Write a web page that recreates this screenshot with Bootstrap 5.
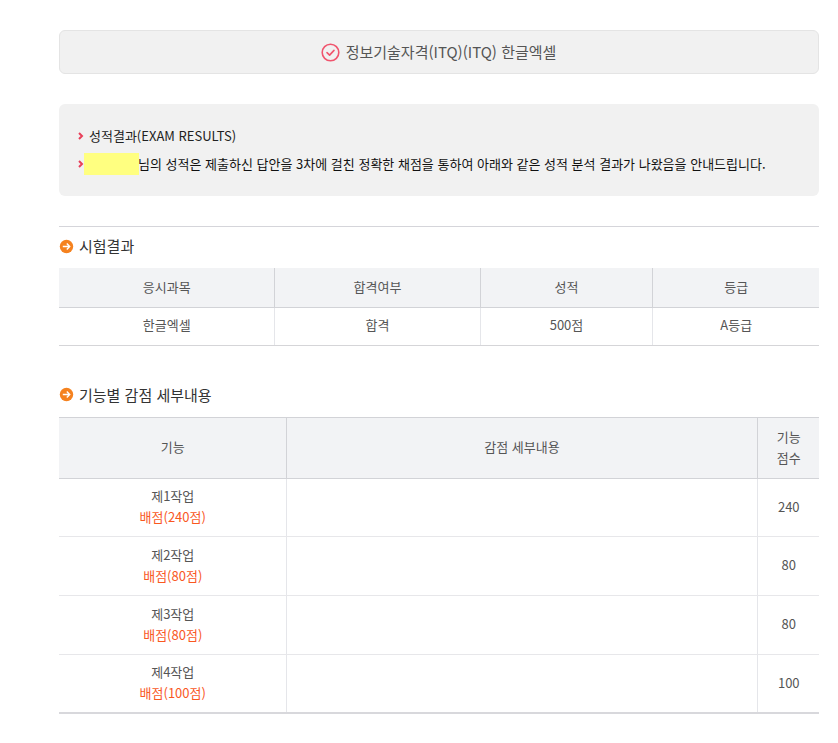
<!DOCTYPE html>
<html lang="ko">
<head>
<meta charset="utf-8">
<title>성적결과</title>
<link href="https://cdn.jsdelivr.net/npm/bootstrap@5.3.0/dist/css/bootstrap.min.css" rel="stylesheet">
<style>
body{font-family:"Noto Sans CJK KR","Noto Sans",sans-serif;font-size:13px;color:#555;background:#fff;overflow:hidden;}
.page-wrap{width:760px;margin-left:59px;padding-top:30px;}
.subject-box{height:44px;background:#f1f1f1;border:1px solid #e4e4e4;border-radius:6px;font-size:15px;color:#555;margin-bottom:30px;gap:6px;padding-right:1px;}
.result-box{height:92px;background:#f1f1f1;border-radius:6px;padding:18px 19px;color:#222;font-size:13px;margin-bottom:30px;}
.result-line{height:28px;line-height:22px;}
.result-strong{color:#111;}
.chev{width:6px;height:8px;margin-right:5px;flex:none;}
.masked{background:#ffff80;width:55px;height:22px;margin-left:-5px;margin-right:-1px;flex:none;}
.sec-title{border-top:1px solid #d5d5da;}
.sec-head{font-size:15px;color:#333;line-height:20px;gap:5px;}
.sec-head svg{flex:none;}
.head-one{height:41px;padding-bottom:3px;}
.head-two{height:22px;margin-top:38px;margin-bottom:11px;}
.tbl{table-layout:fixed;width:760px;border-collapse:collapse;margin:0;font-size:13px;color:#555;}
.tbl th,.tbl td{text-align:center;vertical-align:middle;padding:0 0 2px 1px;font-weight:400;}
.tbl th{background:#f2f3f5;border-bottom:1px solid #d2d3d7;}
.tbl th+th{border-left:1px solid #d2d3d7;}
.tbl td+td{border-left:1px solid #e5e6ea;}
.tbl-a tr.r1{height:39px;}
.tbl-a tr.r2{height:38px;}
.tbl-a td{border-bottom:1px solid #d5d5d8;}
.tbl-b{border-top:1px solid #d2d3d7;}
.tbl-b tr.r1{height:61px;}
.tbl-b th{line-height:21px;}
.tbl-b tr.r2{height:59px;}
.tbl-b tr.first{height:58px;}
.tbl-b td{border-bottom:1px solid #e7e7ea;line-height:21px;}
.tbl-b tr:last-child td{border-bottom:2px solid #d8d8dc;}
.deduct{color:#f9581f;}
</style>
</head>
<body>
<div class="page-wrap">
  <div class="subject-box d-flex align-items-center justify-content-center">
    <svg width="19" height="19" viewBox="0 0 19 19" fill="none" stroke="#f0556e" aria-hidden="true"><circle cx="9.5" cy="9.5" r="8.3" stroke-width="1.6"/><path d="M6 9.6l2.6 2.5L13 7.4" stroke-width="1.6" stroke-linecap="round" stroke-linejoin="round"/></svg>
    <span>정보기술자격(ITQ)(ITQ) 한글엑셀</span>
  </div>
  <div class="result-box">
    <div class="result-line d-flex align-items-center"><svg class="chev" viewBox="0 0 6 8" fill="none" stroke="#e8405a" stroke-width="2"><path d="M1 1l3 3-3 3"/></svg><span>성적결과(EXAM RESULTS)</span></div>
    <div class="result-line result-strong d-flex align-items-center"><svg class="chev" viewBox="0 0 6 8" fill="none" stroke="#e8405a" stroke-width="2"><path d="M1 1l3 3-3 3"/></svg><span class="masked"></span><span class="text-nowrap">님의 성적은 제출하신 답안을 3차에 걸친 정확한 채점을 통하여 아래와 같은 성적 분석 결과가 나왔음을 안내드립니다.</span></div>
  </div>
  <div class="sec-title">
    <div class="sec-head head-one d-flex align-items-center">
      <svg width="15" height="15" viewBox="0 0 15 15"><circle cx="7.5" cy="7.5" r="6.7" fill="#f5821f"/><path d="M3.8 7.5h7M7.8 4.6l2.9 2.9-2.9 2.9" fill="none" stroke="#fff" stroke-width="1.4"/></svg>
      <span>시험결과</span>
    </div>
    <table class="tbl tbl-a">
      <colgroup><col style="width:215px"><col style="width:206px"><col style="width:172px"><col style="width:167px"></colgroup>
      <tr class="r1"><th>응시과목</th><th>합격여부</th><th>성적</th><th>등급</th></tr>
      <tr class="r2"><td>한글엑셀</td><td>합격</td><td>500점</td><td>A등급</td></tr>
    </table>
  </div>
  <div class="sec-head head-two d-flex align-items-center">
    <svg width="15" height="15" viewBox="0 0 15 15"><circle cx="7.5" cy="7.5" r="6.7" fill="#f5821f"/><path d="M3.8 7.5h7M7.8 4.6l2.9 2.9-2.9 2.9" fill="none" stroke="#fff" stroke-width="1.4"/></svg>
    <span>기능별 감점 세부내용</span>
  </div>
  <table class="tbl tbl-b">
    <colgroup><col style="width:227px"><col style="width:471px"><col style="width:62px"></colgroup>
    <tr class="r1"><th>기능</th><th>감점 세부내용</th><th>기능<br>점수</th></tr>
    <tr class="r2 first"><td>제1작업<br><span class="deduct">배점(240점)</span></td><td></td><td>240</td></tr>
    <tr class="r2"><td>제2작업<br><span class="deduct">배점(80점)</span></td><td></td><td>80</td></tr>
    <tr class="r2"><td>제3작업<br><span class="deduct">배점(80점)</span></td><td></td><td>80</td></tr>
    <tr class="r2"><td>제4작업<br><span class="deduct">배점(100점)</span></td><td></td><td>100</td></tr>
  </table>
</div>
</body>
</html>
